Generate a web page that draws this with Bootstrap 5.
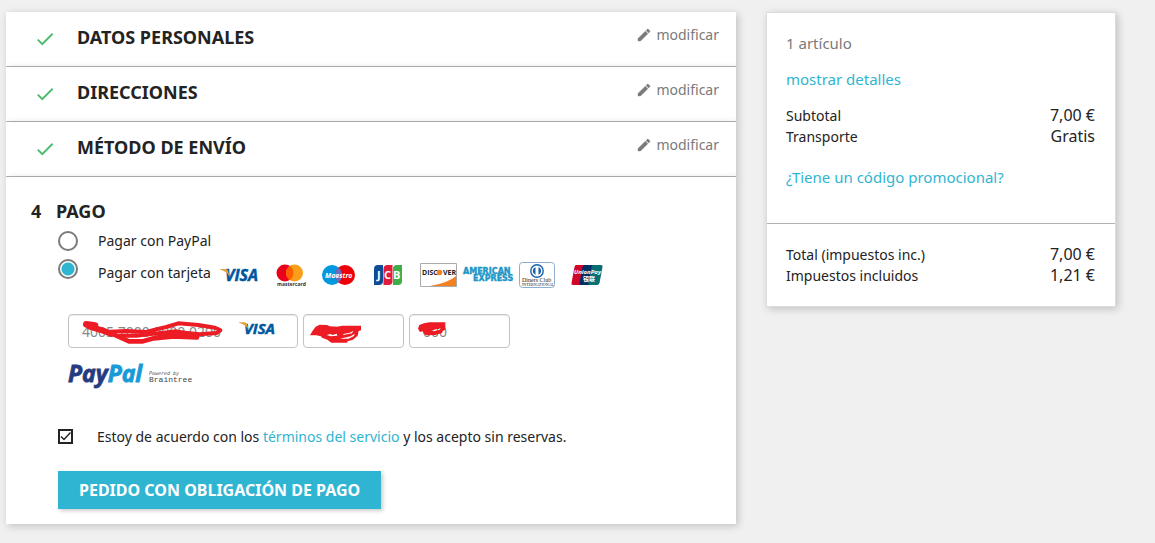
<!DOCTYPE html>
<html lang="es">
<head>
<meta charset="utf-8">
<meta name="viewport" content="width=device-width, initial-scale=1">
<title>Pago</title>
<link href="https://cdn.jsdelivr.net/npm/bootstrap@5.3.0/dist/css/bootstrap.min.css" rel="stylesheet">
<style>
body{background:#f0f0f0;color:#232323;font:14px/21px "Noto Sans",sans-serif}
a{color:#2fb5d2;text-decoration:none}
.page-wrap{padding:12px 39px 19px 6px}
.page-wrap>.row{--bs-gutter-x:30px}
.step{background:#fff;box-shadow:2px 2px 8px 0 rgba(0,0,0,.2)}
.step-done{height:55px;padding:0 17px 0 28px;border-bottom:1px solid #b2b2b2}
.step h1{font-size:18px;line-height:24px;font-weight:700;margin:0;color:#232323}
.step-done h1{padding:13px 0 0 21px}
.step-done .tick{margin-top:16px}
.edit-link{color:#7a7a7a;margin-top:12px}
.step-open{padding:22px 24px 15px 25px}
.step-num{width:25px}
.step-body{padding:8px 0 0 27px}
.pay-radio{appearance:none;width:20px;height:20px;border:2px solid #7a7a7a;border-radius:50%;margin:0;flex:none;background:#fff}
.pay-radio:checked{background:radial-gradient(circle,#2fb5d2 0 6px,#fff 7px)}
.pay-row{gap:20px;margin-bottom:8px;line-height:20px}
.pay-card label{padding-top:4px}
.brands svg{display:block;overflow:visible}
.card-fields{gap:5px;padding:17px 0 14px 10px}
.field{position:relative;height:34px;width:101px}
.field-long{width:230px}
.field input{width:100%;height:34px;border:1px solid #c4c4c4;border-radius:4px;padding:0 13px;font-size:14px;color:#888;box-shadow:inset 0 1px 1px rgba(0,0,0,.08)}
.field svg{position:absolute;top:0;left:0;width:100%;height:100%;pointer-events:none}
.paypal{margin-left:10px;display:block;overflow:visible}
.terms{gap:24px;margin-top:36px;margin-bottom:24px}
.terms-box{appearance:none;width:15px;height:15px;border:2px solid #232323;margin:0;flex:none;background:#fff url("data:image/svg+xml,%3Csvg xmlns='http://www.w3.org/2000/svg' viewBox='0 0 11 11'%3E%3Cpath d='M1 5.5l3 3L10.500 1.500' fill='none' stroke='%23232323' stroke-width='1.500'/%3E%3C/svg%3E")}
.pay-btn{background:#2fb5d2;color:#fff;border:0;border-radius:0;font-size:16px;line-height:22px;font-weight:700;padding:8px 21px;box-shadow:2px 2px 4px 0 rgba(0,0,0,.2)}
.summary{background:#fff;border:1px solid #dcdcdc;box-shadow:2px 2px 8px 0 rgba(0,0,0,.2)}
.summary .block{padding:20px 20px 20px 19px}
.summary .mid{font-size:15px;line-height:21px;margin-bottom:15px}
.summary .count{color:#7a7a7a}
.summary .value{font-size:16px}
.summary .totals{border-top:1px solid #b2b2b2}
</style>
</head>
<body>
<svg width="0" height="0" class="position-absolute" aria-hidden="true">
<symbol id="tick" viewBox="0 0 24 24"><path d="M9 16.170L4.830 12l-1.420 1.410L9 19 21 7l-1.410-1.410z" fill="#4cbb6c"/></symbol>
<symbol id="pen" viewBox="0 0 24 24"><path d="M3 17.250V21h3.750L17.810 9.940l-3.750-3.750L3 17.250zM20.710 7.040c.39-.39.39-1.020 0-1.410l-2.340-2.340c-.39-.39-1.020-.39-1.410 0l-1.830 1.830 3.750 3.750 1.830-1.830z" fill="#7a7a7a" stroke="#7a7a7a" stroke-width=".6"/></symbol>
</svg>
<main class="page-wrap">
<div class="row">
<div class="col-8">
  <section class="step step-done d-flex align-items-start"><svg class="tick" width="22" height="22"><use href="#tick"/></svg><h1>DATOS PERSONALES</h1><a href="#" class="edit-link ms-auto d-flex align-items-center gap-1"><svg width="16" height="16"><use href="#pen"/></svg>modificar</a></section>
  <section class="step step-done d-flex align-items-start"><svg class="tick" width="22" height="22"><use href="#tick"/></svg><h1>DIRECCIONES</h1><a href="#" class="edit-link ms-auto d-flex align-items-center gap-1"><svg width="16" height="16"><use href="#pen"/></svg>modificar</a></section>
  <section class="step step-done d-flex align-items-start"><svg class="tick" width="22" height="22"><use href="#tick"/></svg><h1>MÉTODO DE ENVÍO</h1><a href="#" class="edit-link ms-auto d-flex align-items-center gap-1"><svg width="16" height="16"><use href="#pen"/></svg>modificar</a></section>
  <section class="step step-open">
    <h1 class="d-flex"><span class="step-num">4</span>PAGO</h1>
    <form class="step-body">
      <div class="pay-row d-flex align-items-start"><input class="pay-radio" type="radio" name="pay" id="pp"><label for="pp">Pagar con PayPal</label></div>
      <div class="pay-row pay-card d-flex align-items-start"><input class="pay-radio" type="radio" name="pay" id="cc" checked>
        <label for="cc" class="d-flex align-items-start">Pagar con tarjeta
        <span class="brands ms-2"><svg width="390" height="26" viewBox="219 263 390 26" font-family="Open Sans,sans-serif" font-weight="700">
          <text x="225" y="281" font-size="16" font-style="italic" fill="#00579f" stroke="#00579f" stroke-width=".5">VISA</text><path d="M220 269h5.500q2 0 2.500 2l1.500 5.500q-2.500-5-9.500-7z" fill="#e5a13a"/>
          <circle cx="285" cy="273" r="8.500" fill="#eb001b"/><circle cx="294.500" cy="273" r="8.500" fill="#f79e1b"/><path d="M289.750 266a8.500 8.500 0 010 14a8.500 8.500 0 010-14z" fill="#ff5f00"/>
          <text x="277" y="286" font-size="5" fill="#333">mastercard</text>
          <circle cx="332" cy="275" r="10" fill="#0099df"/><circle cx="345" cy="275" r="10" fill="#ed0006"/><path d="M338.500 267.400a10 10 0 010 15.200a10 10 0 010-15.200z" fill="#6c6bbd"/>
          <text x="325" y="278" font-size="7" font-style="italic" fill="#fff">Maestro</text>
          <path d="M378 265h5v16q0 4-4 4h-5v-16q0-4 4-4z" fill="#0e4c96"/><path d="M387.500 265h5v16q0 4-4 4h-5v-16q0-4 4-4z" fill="#e11b3c"/><path d="M397 265h5v16q0 4-4 4h-5v-16q0-4 4-4z" fill="#3fae49"/>
          <g font-size="11" fill="#fff"><text x="377" y="279">J</text><text x="384" y="279">C</text><text x="393" y="279">B</text></g>
          <path d="M420.500 263.500h36v23h-36z" fill="#fff" stroke="#aaa"/><path d="M456 276v10h-26q18-3 26-10z" fill="#f48120"/><text x="422" y="275" font-size="7" fill="#222">DISC</text><circle cx="439.500" cy="272.500" r="2.800" fill="#f48120"/><text x="443" y="275" font-size="7" fill="#222">VER</text>
          <g font-size="8" font-family="DejaVu Sans,sans-serif" fill="#1d96c8" stroke="#1d96c8" stroke-width=".4"><text x="463" y="274">AMERICAN</text><text x="473" y="281">EXPRESS</text></g>
          <rect x="519.500" y="262.500" width="35" height="25" rx="3" fill="#fff" stroke="#8daed0"/><circle cx="537" cy="271" r="6.200" fill="#fff" stroke="#1a61a9" stroke-width="1.400"/><path d="M535.500 267a4.300 4.300 0 000 8zM538.500 267a4.300 4.300 0 010 8z" fill="#1a61a9"/>
          <g font-weight="400" font-family="Liberation Serif,serif" fill="#222"><text x="522" y="282" font-size="6">Diners Club</text><text x="522" y="286" font-size="4">INTERNATIONAL</text></g>
          <path d="M576 265h10l-4 20h-9q-2 0-1.500-2l3-16q.5-2 1.500-2z" fill="#d10429"/><path d="M584 265h10l-4 20h-9q-2 0-1.500-2l3-16q.5-2 1.500-2z" fill="#022e64"/><path d="M593 265h8q2 0 1.500 2l-3 16q-.5 2-2.500 2h-8q-1 0-.5-2l3-16q.5-2 1.500-2z" fill="#076f74"/>
          <text x="574" y="274" font-size="6" font-style="italic" fill="#fff">UnionPay</text><text x="583" y="281" font-size="6" font-family="Noto Sans CJK SC,sans-serif" fill="#fff">银联</text>
        </svg></span></label></div>
      <div class="card-fields d-flex">
        <div class="field field-long"><input type="text" aria-label="Número de tarjeta" value="4005 7000 0000 0200">
          <svg viewBox="25 12 690 102"><g transform="translate(538 34) scale(3) translate(-220 -268)"><text x="225" y="281" font-family="Open Sans,sans-serif" font-size="15" font-style="italic" fill="#00579f" stroke="#00579f" stroke-width=".5" font-weight="700">VISA</text><path d="M220 269h5.500q2 0 2.500 2l1.500 5.500q-2.500-5-9.500-7z" fill="#e5a13a"/></g>
          <g fill="none" stroke="#ed1c24" stroke-linecap="round" stroke-linejoin="round"><path d="M80 43l26 4" stroke-width="20"/><path d="M90 50l40 12 26 10" stroke-width="18"/><path d="M150 68l40 18 18 8h42l32-9 60-6 70 3" stroke-width="14"/><path d="M150 65l50-2 60 3 26-7 34-8 36-11 60 5 50 8 16 8-12 8-50 4-60-6-80 4-50 6h-50" stroke-width="12"/><path d="M300 73l50-6 50 10" stroke-width="18"/></g></svg></div>
        <div class="field"><input type="text" aria-label="Caducidad">
          <svg viewBox="39 28 303 102"><path d="M60 92l8-14 9-12 12-6 22 1 8 4 22 1 16-3h56v14l-7 2-3 14-14 12-17 5v4h-48l-12-9-16-6-3-4-14-3zM110 91l12 4 20-2-2-6-12 4-7-3zM190 78l-10 6-20 4v3l26-5zM194 87l-12 8-20 4-12 3 26 0 16-8z" fill="#ed1c24" fill-rule="evenodd"/></svg></div>
        <div class="field"><input type="text" aria-label="CVV" value="000">
          <svg viewBox="357 28 303 102"><path d="M384 72l4-11 14-5 16-3h48v22l-7 3-3 7-20 6-24 1-10-3-4-9-8 2zM424 77l6 3 20-5 3-5-8 3-6 0-5 2z" fill="#ed1c24" fill-rule="evenodd"/></svg></div>
      </div>
      <svg class="paypal" width="130" height="28" viewBox="68 361 130 28"><text x="68" y="381" font-family="Open Sans,sans-serif" font-size="23" font-weight="700" font-style="italic" fill="#253b80" stroke="#253b80" stroke-width=".8">Pay<tspan fill="#179bd7" stroke="#179bd7">Pal</tspan></text><text x="149" y="374" font-size="5" font-style="italic" font-family="DejaVu Sans Mono,monospace" fill="#555">Powered by</text><text x="149" y="381" font-size="8" font-family="Liberation Mono,monospace" fill="#444">Braintree</text></svg>
      <div class="terms d-flex align-items-center"><input class="terms-box" type="checkbox" id="ok" checked><label for="ok">Estoy de acuerdo con los <a href="#">términos del servicio</a> y los acepto sin reservas.</label></div>
      <button type="button" class="btn pay-btn">PEDIDO CON OBLIGACIÓN DE PAGO</button>
    </form>
  </section>
</div>
<div class="col-4">
  <aside class="summary">
    <div class="block">
      <p class="mid count">1 artículo</p>
      <p class="mid"><a href="#">mostrar detalles</a></p>
      <div class="d-flex justify-content-between"><span>Subtotal</span><span class="value">7,00 €</span></div>
      <div class="d-flex justify-content-between"><span>Transporte</span><span class="value">Gratis</span></div>
      <p class="mid mt-3 pt-1"><a href="#">¿Tiene un código promocional?</a></p>
    </div>
    <div class="block totals">
      <div class="d-flex justify-content-between"><span>Total (impuestos inc.)</span><span class="value">7,00 €</span></div>
      <div class="d-flex justify-content-between"><span>Impuestos incluidos</span><span class="value">1,21 €</span></div>
    </div>
  </aside>
</div>
</div>
</main>
<script src="https://cdn.jsdelivr.net/npm/bootstrap@5.3.0/dist/js/bootstrap.bundle.min.js"></script>
</body>
</html>
